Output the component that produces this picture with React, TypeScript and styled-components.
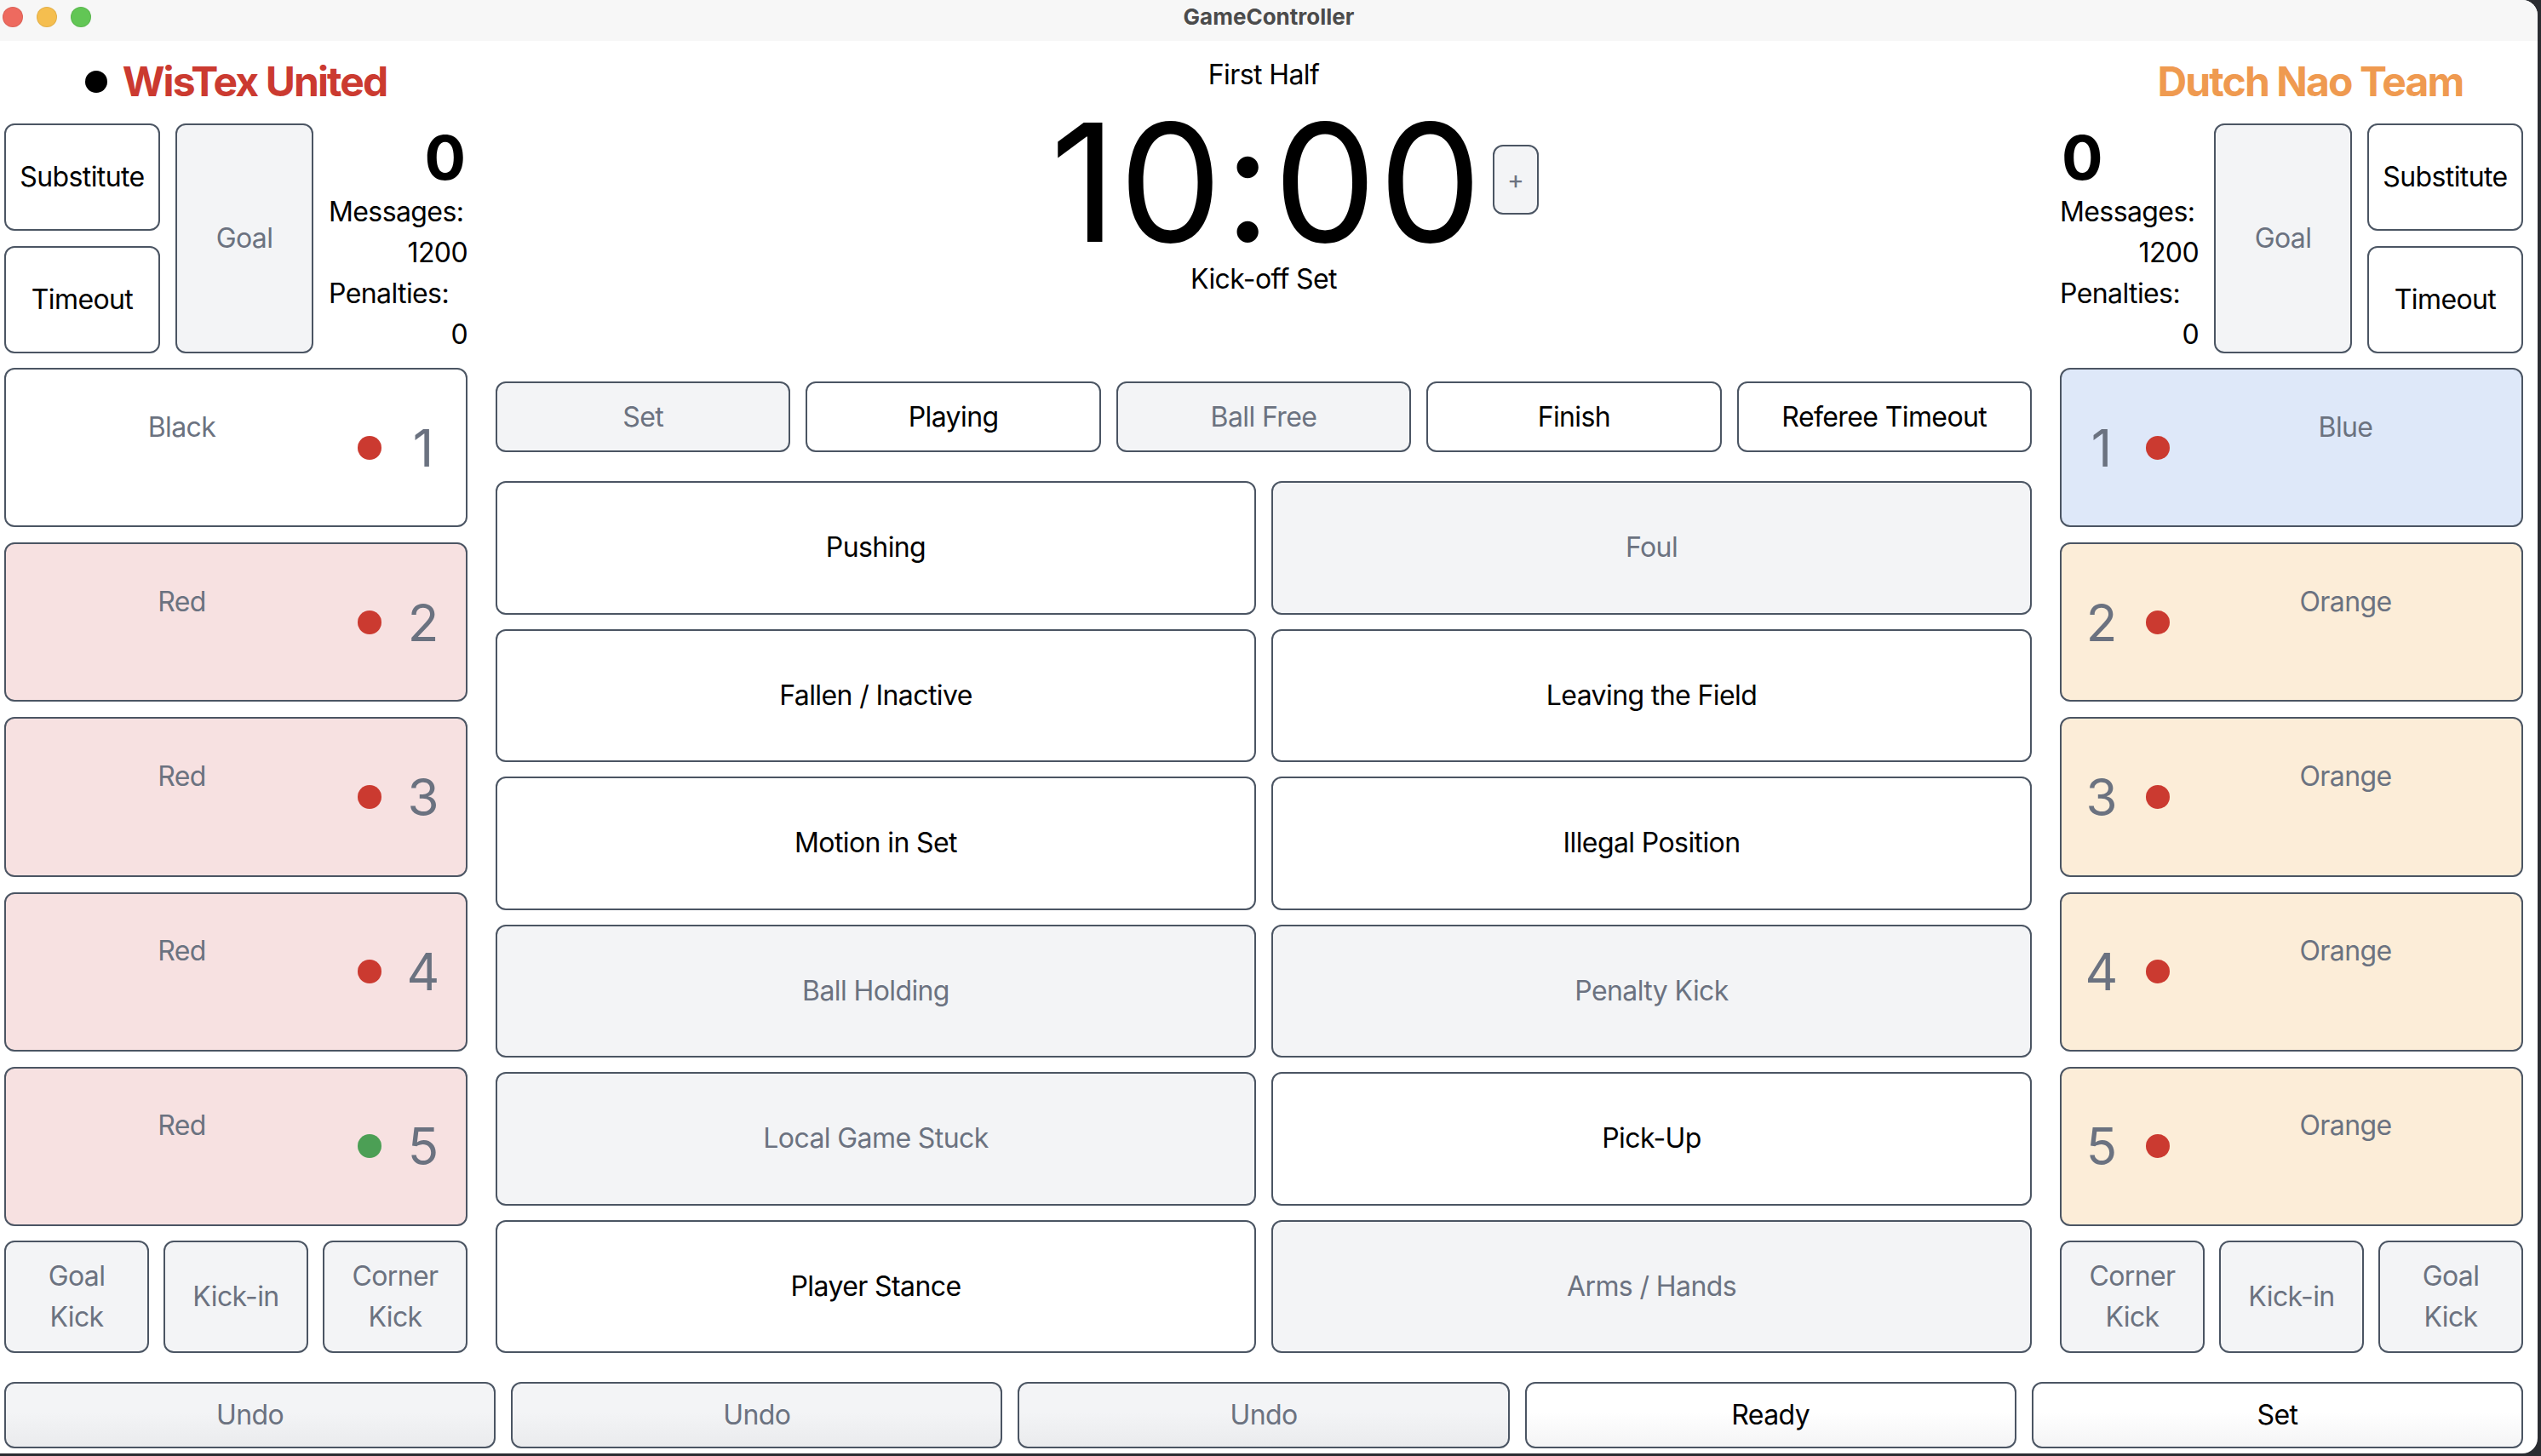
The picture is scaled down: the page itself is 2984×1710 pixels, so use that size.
import React from "react";
import styled, { createGlobalStyle, css } from "styled-components";

const GlobalStyle = createGlobalStyle`
  html, body { margin: 0; padding: 0; background: #2a2c31; }
  body { font-family: Inter, "Noto Sans", "Liberation Sans", sans-serif; }
  * { box-sizing: border-box; }
`;

const Window = styled.div`
  width: 2980px;
  height: 1707px;
  background: #ffffff;
  border-radius: 0 18px 18px 0;
  overflow: hidden;
  display: flex;
  flex-direction: column;
`;

const TitleBar = styled.div`
  flex: none;
  height: 48px;
  background: #f7f7f7;
  display: grid;
  grid-template-columns: 1fr auto 1fr;
  align-items: start;
  padding-top: 8px;
`;

const Lights = styled.div`
  display: flex;
  gap: 16px;
  padding-left: 3px;
`;

const Light = styled.span<{ $c: string }>`
  width: 24px;
  height: 24px;
  border-radius: 50%;
  background: ${(p) => p.$c};
  box-shadow: inset 0 0 0 1px rgba(0, 0, 0, 0.08);
`;

const Title = styled.div`
  font-size: 26px;
  line-height: 24px;
  font-weight: 700;
  color: #4b4b4b;
`;

const Content = styled.div`
  flex: 1;
  display: flex;
  flex-direction: column;
  gap: 34px;
  padding: 16px 17px 6px 5px;
  min-height: 0;
  letter-spacing: -0.6px;
`;

const MainRow = styled.div`
  flex: 1;
  display: grid;
  grid-template-columns: 544px 1fr 544px;
  column-gap: 33px;
  min-height: 0;
`;

const SidePanel = styled.div`
  display: flex;
  flex-direction: column;
  gap: 17px;
  min-height: 0;
`;

const TeamHeader = styled.div`
  height: 64px;
  display: flex;
  align-items: center;
  justify-content: center;
  gap: 18px;
`;

const KickDot = styled.span<{ $visible: boolean }>`
  width: 26px;
  height: 26px;
  border-radius: 50%;
  background: #000;
  visibility: ${(p) => (p.$visible ? "visible" : "hidden")};
`;

const TeamName = styled.span<{ $color: string }>`
  font-size: 48px;
  line-height: 64px;
  font-weight: 700;
  color: ${(p) => p.$color};
  letter-spacing: -1.9px;
`;

const TopArea = styled.div<{ $right: boolean }>`
  height: 270px;
  display: grid;
  gap: 18px;
  grid-template-rows: 1fr 1fr;
  ${(p) =>
    p.$right
      ? css`
          grid-template-columns: 163fr 162fr 183fr;
          grid-template-areas: "stats goal sub" "stats goal timeout";
        `
      : css`
          grid-template-columns: 183fr 162fr 163fr;
          grid-template-areas: "sub goal stats" "timeout goal stats";
        `}
`;

const Button = styled.button<{ $disabled?: boolean; $area?: string }>`
  font-family: inherit;
  font-size: 32px;
  line-height: 48px;
  font-weight: 400;
  letter-spacing: -0.6px;
  border: 2px solid #4b5563;
  border-radius: 12px;
  padding: 0;
  margin: 0;
  background: ${(p) => (p.$disabled ? "#f3f4f6" : "#ffffff")};
  color: ${(p) => (p.$disabled ? "#6b7280" : "#000000")};
  display: flex;
  align-items: center;
  justify-content: center;
  text-align: center;
  white-space: pre-line;
  min-width: 0;
  min-height: 0;
  ${(p) => (p.$area ? `grid-area: ${p.$area};` : "")}
`;

const Stats = styled.div`
  grid-area: stats;
  display: flex;
  flex-direction: column;
  font-size: 32px;
  line-height: 48px;
  color: #000;
`;

const Score = styled.div<{ $right: boolean }>`
  font-size: 72px;
  line-height: 80px;
  font-weight: 700;
  letter-spacing: 0;
  text-align: ${(p) => (p.$right ? "left" : "right")};
  padding: 0 2px;
`;

const StatLabel = styled.div`
  text-align: left;
`;

const StatValue = styled.div`
  text-align: right;
`;

const PlayerList = styled.div`
  height: 1008px;
  display: flex;
  flex-direction: column;
  gap: 18px;
`;

const PlayerCard = styled.button<{ $bg: string; $right: boolean }>`
  flex: 1;
  font-family: inherit;
  letter-spacing: -0.6px;
  border: 2px solid #4b5563;
  border-radius: 12px;
  background: ${(p) => p.$bg};
  margin: 0;
  display: flex;
  flex-direction: ${(p) => (p.$right ? "row-reverse" : "row")};
  align-items: center;
  padding: ${(p) => (p.$right ? "0 0 0 23px" : "0 26px 0 0")};
  color: #6b7280;
`;

const NameArea = styled.div`
  flex: 1;
  display: flex;
  flex-direction: column;
  align-items: center;
  font-size: 32px;
  line-height: 48px;
`;

const NameLine = styled.div`
  height: 48px;
`;

const StatusDot = styled.span<{ $color: string }>`
  flex: none;
  width: 28px;
  height: 28px;
  border-radius: 50%;
  background: ${(p) => p.$color};
`;

const Number = styled.span<{ $right: boolean }>`
  flex: none;
  width: 48px;
  text-align: center;
  font-size: 60px;
  line-height: 72px;
  letter-spacing: 0;
  ${(p) => (p.$right ? "margin-right: 28px;" : "margin-left: 25px;")}
`;

const SetPlays = styled.div`
  flex: 1;
  display: grid;
  grid-template-columns: repeat(3, 1fr);
  gap: 17px;
`;

const CenterPanel = styled.div`
  display: flex;
  flex-direction: column;
  min-height: 0;
`;

const ClockSection = styled.div`
  height: 288px;
  margin-bottom: 96px;
  display: flex;
  flex-direction: column;
  align-items: stretch;
  color: #000;
`;

const InfoLine = styled.div`
  font-size: 32px;
  line-height: 48px;
  text-align: center;
`;

const TimerRow = styled.div`
  display: grid;
  grid-template-columns: 1fr auto 1fr;
  align-items: center;
  height: 192px;
`;

const Timer = styled.div`
  grid-column: 2;
  font-size: 192px;
  line-height: 192px;
  font-weight: 400;
  letter-spacing: 2.5px;
  padding: 6px 0 0 8px;
`;

const PlusButton = styled(Button)`
  grid-column: 3;
  justify-self: start;
  width: 54px;
  height: 82px;
  margin-left: 10px;
  font-size: 30px;
`;

const StateRow = styled.div`
  height: 83px;
  display: grid;
  grid-template-columns: repeat(5, 1fr);
  gap: 18px;
  margin-bottom: 34px;
`;

const PenaltyGrid = styled.div`
  flex: 1;
  display: grid;
  grid-template-columns: 1fr 1fr;
  grid-template-rows: repeat(6, 1fr);
  column-gap: 18px;
  row-gap: 17px;
`;

const BottomBar = styled.div`
  height: 78px;
  flex: none;
  display: grid;
  grid-template-columns: repeat(5, 1fr);
  gap: 18px;
`;

const BottomButton = styled(Button)`
  background: ${(p) =>
    p.$disabled
      ? "linear-gradient(to bottom, #f3f4f6 45%, #eaebed 100%)"
      : "linear-gradient(to bottom, #ffffff 45%, #f4f4f5 100%)"};
`;

type Player = { name: string; num: number; bg: string; dot: string };

const leftPlayers: Player[] = [
  { name: "Black", num: 1, bg: "#ffffff", dot: "#cb3a30" },
  { name: "Red", num: 2, bg: "#f7e1e1", dot: "#cb3a30" },
  { name: "Red", num: 3, bg: "#f7e1e1", dot: "#cb3a30" },
  { name: "Red", num: 4, bg: "#f7e1e1", dot: "#cb3a30" },
  { name: "Red", num: 5, bg: "#f7e1e1", dot: "#4c9f55" },
];

const rightPlayers: Player[] = [
  { name: "Blue", num: 1, bg: "#dee8f9", dot: "#cb3a30" },
  { name: "Orange", num: 2, bg: "#fcedd8", dot: "#cb3a30" },
  { name: "Orange", num: 3, bg: "#fcedd8", dot: "#cb3a30" },
  { name: "Orange", num: 4, bg: "#fcedd8", dot: "#cb3a30" },
  { name: "Orange", num: 5, bg: "#fcedd8", dot: "#cb3a30" },
];

function Side({
  right,
  name,
  color,
  kicking,
  players,
}: {
  right: boolean;
  name: string;
  color: string;
  kicking: boolean;
  players: Player[];
}) {
  const setPlays = right
    ? ["Corner\nKick", "Kick-in", "Goal\nKick"]
    : ["Goal\nKick", "Kick-in", "Corner\nKick"];
  return (
    <SidePanel>
      <TeamHeader>
        <KickDot $visible={kicking} />
        <TeamName $color={color}>{name}</TeamName>
      </TeamHeader>
      <TopArea $right={right}>
        <Button $area="sub">Substitute</Button>
        <Button $area="timeout">Timeout</Button>
        <Button $area="goal" $disabled>
          Goal
        </Button>
        <Stats>
          <Score $right={right}>0</Score>
          <StatLabel>Messages:</StatLabel>
          <StatValue>1200</StatValue>
          <StatLabel>Penalties:</StatLabel>
          <StatValue>0</StatValue>
        </Stats>
      </TopArea>
      <PlayerList>
        {players.map((p) => (
          <PlayerCard key={p.num} $bg={p.bg} $right={right}>
            <NameArea>
              <NameLine>{p.name}</NameLine>
              <NameLine />
            </NameArea>
            <StatusDot $color={p.dot} />
            <Number $right={right}>{p.num}</Number>
          </PlayerCard>
        ))}
      </PlayerList>
      <SetPlays>
        {setPlays.map((s) => (
          <Button key={s} $disabled>
            {s}
          </Button>
        ))}
      </SetPlays>
    </SidePanel>
  );
}

const states: [string, boolean][] = [
  ["Set", true],
  ["Playing", false],
  ["Ball Free", true],
  ["Finish", false],
  ["Referee Timeout", false],
];

const penalties: [string, boolean][] = [
  ["Pushing", false],
  ["Foul", true],
  ["Fallen / Inactive", false],
  ["Leaving the Field", false],
  ["Motion in Set", false],
  ["Illegal Position", false],
  ["Ball Holding", true],
  ["Penalty Kick", true],
  ["Local Game Stuck", true],
  ["Pick-Up", false],
  ["Player Stance", false],
  ["Arms / Hands", true],
];

const bottom: [string, boolean][] = [
  ["Undo", true],
  ["Undo", true],
  ["Undo", true],
  ["Ready", false],
  ["Set", false],
];

export default function App() {
  return (
    <>
      <GlobalStyle />
      <Window>
        <TitleBar>
          <Lights>
            <Light $c="#ee6a5f" />
            <Light $c="#f5be4f" />
            <Light $c="#62c655" />
          </Lights>
          <Title>GameController</Title>
          <div />
        </TitleBar>
        <Content>
          <MainRow>
            <Side
              right={false}
              name="WisTex United"
              color="#cb3a30"
              kicking
              players={leftPlayers}
            />
            <CenterPanel>
              <ClockSection>
                <InfoLine>First Half</InfoLine>
                <TimerRow>
                  <Timer>10:00</Timer>
                  <PlusButton $disabled>+</PlusButton>
                </TimerRow>
                <InfoLine>Kick-off Set</InfoLine>
              </ClockSection>
              <StateRow>
                {states.map(([label, dis]) => (
                  <Button key={label} $disabled={dis}>
                    {label}
                  </Button>
                ))}
              </StateRow>
              <PenaltyGrid>
                {penalties.map(([label, dis]) => (
                  <Button key={label} $disabled={dis}>
                    {label}
                  </Button>
                ))}
              </PenaltyGrid>
            </CenterPanel>
            <Side
              right
              name="Dutch Nao Team"
              color="#ef9a50"
              kicking={false}
              players={rightPlayers}
            />
          </MainRow>
          <BottomBar>
            {bottom.map(([label, dis], i) => (
              <BottomButton key={i} $disabled={dis}>
                {label}
              </BottomButton>
            ))}
          </BottomBar>
        </Content>
      </Window>
    </>
  );
}
